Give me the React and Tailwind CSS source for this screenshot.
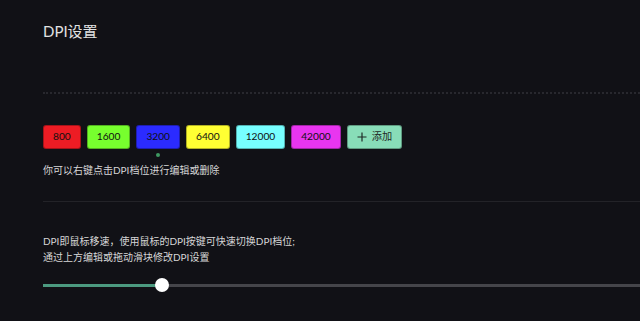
import React from "react";

const levels = [
  { v: "800", c: "bg-[#ed1c24]" },
  { v: "1600", c: "bg-[#77ff2e]" },
  { v: "3200", c: "bg-[#2b2bff]", active: true },
  { v: "6400", c: "bg-[#ffff33]" },
  { v: "12000", c: "bg-[#77ffff]" },
  { v: "42000", c: "bg-[#e935f0]" },
];

export default function App() {
  return (
    <div
      className="w-[640px] h-[321px] bg-[#111116] overflow-hidden pl-[43px]"
      style={{ fontFamily: "Lato, 'Noto Sans CJK SC', sans-serif" }}
    >
      <div className="pt-[21px] text-[15px] leading-[20px] text-[#e2e2e2]">DPI设置</div>
      <div className="mt-[51px] border-t-2 border-dotted border-[#28282e]" />
      <div className="mt-[31px] flex gap-[6px]">
        {levels.map((l) => (
          <div
            key={l.v}
            className={`relative h-[24px] px-[9px] flex items-center rounded-[3px] text-[10.2px] text-[#101010] border border-black/30 ${l.c}`}
          >
            {l.v}
            {l.active && (
              <span className="absolute left-1/2 -translate-x-1/2 top-[27px] w-[4px] h-[4px] rounded-full bg-[#3f9a62]" />
            )}
          </div>
        ))}
        <div className="h-[24px] px-[9px] flex items-center gap-[5px] rounded-[3px] bg-[#88ddb8] border border-black/30 text-[10.2px] text-[#1f2a25]">
          <svg width="10" height="10" viewBox="0 0 10 10">
            <path d="M5 0.5v9M0.5 5h9" stroke="#1f2a25" strokeWidth="1.2" />
          </svg>
          <span>添加</span>
        </div>
      </div>
      <div className="mt-[14px] text-[10px] leading-[14px] text-[#d6d6d6]">
        你可以右键点击DPI档位进行编辑或删除
      </div>
      <div className="mt-[24px] h-[1px] bg-[#232328]" />
      <div className="mt-[31px] text-[10px] leading-[16px] text-[#d6d6d6]">
        <div>DPI即鼠标移速，使用鼠标的DPI按键可快速切换DPI档位;</div>
        <div>通过上方编辑或拖动滑块修改DPI设置</div>
      </div>
      <div className="mt-[13px] relative h-[14px] flex items-center">
        <div className="w-full h-[3px] bg-[#45454a] flex">
          <div className="w-[119px] h-full bg-[#4c9a80]" />
        </div>
        <div className="absolute left-[112px] top-[0px] w-[14px] h-[14px] rounded-full bg-white" />
      </div>
    </div>
  );
}
